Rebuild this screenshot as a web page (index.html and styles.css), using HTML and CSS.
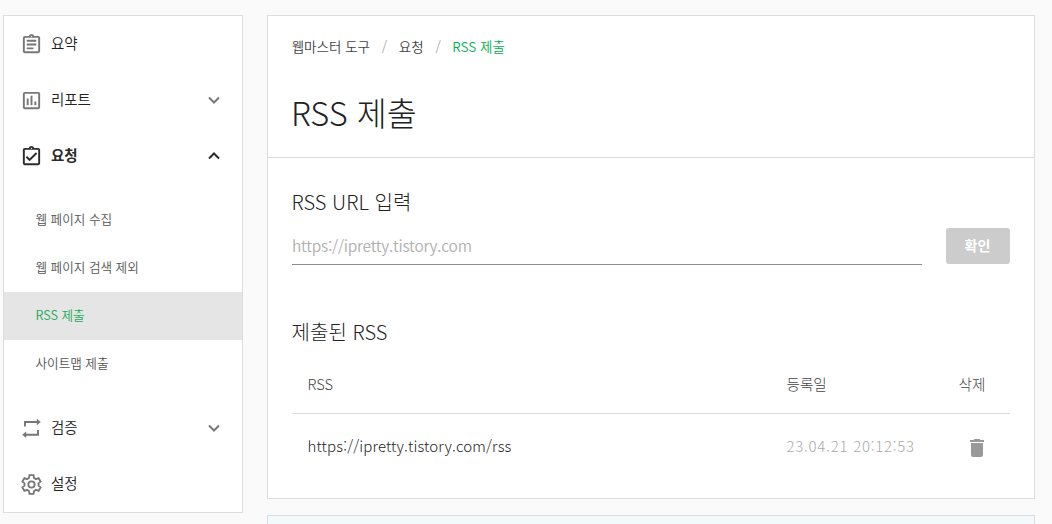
FILE: index.html
```html
<!DOCTYPE html>
<html lang="ko">
<head>
<meta charset="utf-8">
<title>RSS 제출</title>
<link rel="stylesheet" href="styles.css">
</head>
<body>
<div class="layout">
  <nav class="sidebar">
    <a class="item">
      <svg class="icon" viewBox="0 0 24 24"><path d="M7 15h7v2H7zm0-4h10v2H7zm0-4h10v2H7zm12-4h-4.180C14.400 1.840 13.300 1 12 1c-1.300 0-2.400.84-2.820 2H5c-1.100 0-2 .9-2 2v14c0 1.100.9 2 2 2h14c1.100 0 2-.9 2-2V5c0-1.100-.9-2-2-2zm-7-.25c.41 0 .75.34.75.75s-.34.75-.75.75-.75-.34-.75-.75.34-.75.75-.75zM19 19H5V5h14v14z"/></svg>
      <span class="label">요약</span>
    </a>
    <a class="item">
      <svg class="icon" viewBox="0 0 24 24"><path d="M9 17H7v-7h2v7zm4 0h-2V7h2v10zm4 0h-2v-4h2v4zm2 2H5V5h14v14zm0-16H5c-1.100 0-2 .9-2 2v14c0 1.100.9 2 2 2h14c1.100 0 2-.9 2-2V5c0-1.100-.9-2-2-2z"/></svg>
      <span class="label">리포트</span>
      <svg class="arrow" viewBox="0 0 14 14"><path d="M2 4.500l5 5 5-5"/></svg>
    </a>
    <a class="item open">
      <svg class="icon" viewBox="0 0 24 24"><path d="M18 9l-1.400-1.400-6.600 6.600-2.600-2.600L6 13l4 4zM19 3h-4.180C14.400 1.840 13.300 1 12 1s-2.400.84-2.820 2H5c-1.100 0-2 .9-2 2v14c0 1.100.9 2 2 2h14c1.100 0 2-.9 2-2V5c0-1.100-.9-2-2-2zm-7-.25c.41 0 .75.34.75.75s-.34.75-.75.75-.75-.34-.75-.75.34-.75.75-.75zM19 19H5V5h14v14z"/></svg>
      <span class="label">요청</span>
      <svg class="arrow" viewBox="0 0 14 14"><path d="M2 9.500l5-5 5 5"/></svg>
    </a>
    <div class="submenu">
      <a class="subitem">웹 페이지 수집</a>
      <a class="subitem">웹 페이지 검색 제외</a>
      <a class="subitem active">RSS 제출</a>
      <a class="subitem">사이트맵 제출</a>
    </div>
    <a class="item">
      <svg class="icon" viewBox="0 0 24 24"><path d="M4.200 10V4.200h13.300V1.800l4.200 3.400-4.200 3.400V6.200H6.200V10zM19.800 13.500v6H6.500v2.400l-4.200-3.400 4.200-3.400v2.400h11.300v-4z"/></svg>
      <span class="label">검증</span>
      <svg class="arrow" viewBox="0 0 14 14"><path d="M2 4.500l5 5 5-5"/></svg>
    </a>
    <a class="item">
      <svg class="icon" viewBox="0 0 24 24"><g class="gear"><path d="M9.900 2.300h4.200l.5 2.900 2 1.200 2.800-1 2.100 3.600-2.200 1.800v2.400l2.200 1.800-2.100 3.600-2.800-1-2 1.200-.5 2.900H9.900l-.5-2.900-2-1.200-2.800 1L2.500 15l2.200-1.800v-2.400L2.500 9l2.100-3.600 2.800 1 2-1.200z"/><circle cx="12" cy="12" r="3.300"/></g></svg>
      <span class="label">설정</span>
    </a>
  </nav>
  <main class="main">
    <section class="panel">
      <header class="head">
        <div class="crumbs"><span>웹마스터 도구</span><i>/</i><span>요청</span><i>/</i><span class="current">RSS 제출</span></div>
        <h1 class="title">RSS 제출</h1>
      </header>
      <div class="body">
        <h2 class="heading">RSS URL 입력</h2>
        <div class="form">
          <div class="field">https://ipretty.tistory.com</div>
          <button class="submit">확인</button>
        </div>
        <h2 class="heading submitted">제출된 RSS</h2>
        <div class="row thead"><span>RSS</span><span>등록일</span><span>삭제</span></div>
        <div class="row">
          <span class="url">https://ipretty.tistory.com/rss</span>
          <span class="date">23.04.21 20:12:53</span>
          <span class="del"><svg class="trash" viewBox="0 0 14 18"><path d="M1 4h12v12a2 2 0 0 1-2 2H3a2 2 0 0 1-2-2zM0 1h3.500l1-1h5l1 1H14v2H0z"/></svg></span>
        </div>
      </div>
    </section>
    <section class="notice"></section>
  </main>
</div>
</body>
</html>
```
FILE: styles.css
```css
* { box-sizing: border-box; }
body { margin: 0; background: #fafafa; color: #222; font-family: "Noto Sans CJK KR", sans-serif; font-weight: 300; }
.layout { display: flex; align-items: flex-start; gap: 24px; padding: 15px 17px 0 3px; }
.sidebar { width: 240px; border: 1px solid #ddd; background: #fff; }
.item { display: flex; align-items: center; height: 56px; padding: 0 21px 0 16px; font-size: 14.500px; font-weight: 350; }
.icon { width: 23px; height: 23px; fill: #777; }
.gear { fill: none; stroke: #777; stroke-width: 1.900; }
.label { flex: 1; margin-left: 8px; padding-bottom: 4px; letter-spacing: -0.1px; }
.arrow { width: 14px; height: 14px; fill: none; stroke: #777; stroke-width: 2; }
.open { font-weight: 700; color: #2b2b2b; }
.open .icon { fill: #2b2b2b; }
.open .arrow { stroke: #2b2b2b; }
.submenu { padding: 12px 0; }
.subitem { display: block; height: 48px; padding-left: 31.500px; font-size: 12.600px; line-height: 45px; color: #555; font-weight: 350; }
.active { background: #e5e5e5; color: #19a957; }
.main { width: 768px; }
.panel { height: 484px; border: 1px solid #ddd; background: #fff; }
.head { height: 142px; padding: 19px 24px 0; border-bottom: 1px solid #ddd; }
.crumbs { display: flex; height: 22px; font-size: 13.500px; line-height: 22px; color: #444; font-weight: 350; }
.crumbs i { width: 29px; text-align: center; font-style: normal; color: #aaa; }
.crumbs span { margin-left: -0.300px; }
.crumbs .current { color: #03b050; }
.title { margin: 29px 0 0 -1px; font-size: 32.600px; line-height: 52px; font-weight: 300; }
.body { padding: 28px 24px 0; }
.heading { margin: 0 0 0 -0.500px; height: 32px; font-size: 20px; line-height: 32px; font-weight: 300; letter-spacing: 0.05px; }
.form { display: flex; gap: 24px; margin-top: 10px; }
.field { width: 630px; height: 37px; border-bottom: 1px solid #8f8f8f; font-size: 15.500px; line-height: 34px; color: #b0b0b0; font-weight: 350; letter-spacing: -0.22px; }
.submit { width: 64px; height: 36px; padding: 0 1px 3px 0; border: 0; border-radius: 3px; background: #ccc; color: #fff; font: 700 14px "Noto Sans CJK KR", sans-serif; }
.submitted { margin-top: 51px; }
.row { display: grid; grid-template-columns: 479px 172px 1fr; align-items: center; width: 718px; height: 66px; padding-left: 15.500px; font-size: 15px; }
.thead { padding-top: 5px; border-bottom: 1px solid #ddd; font-size: 14.600px; color: #444; }
.url { padding-bottom: 3px; color: #222; letter-spacing: 0.16px; }
.date { padding-bottom: 4px; color: #aaa; letter-spacing: 0.75px; }
.del { padding: 2px 0 0 11.500px; }
.trash { display: block; width: 14px; height: 18px; fill: #999; }
.notice { height: 9px; margin-top: 16px; border: 1px solid #ddd; border-bottom: 0; background: #f4fafc; }
```
